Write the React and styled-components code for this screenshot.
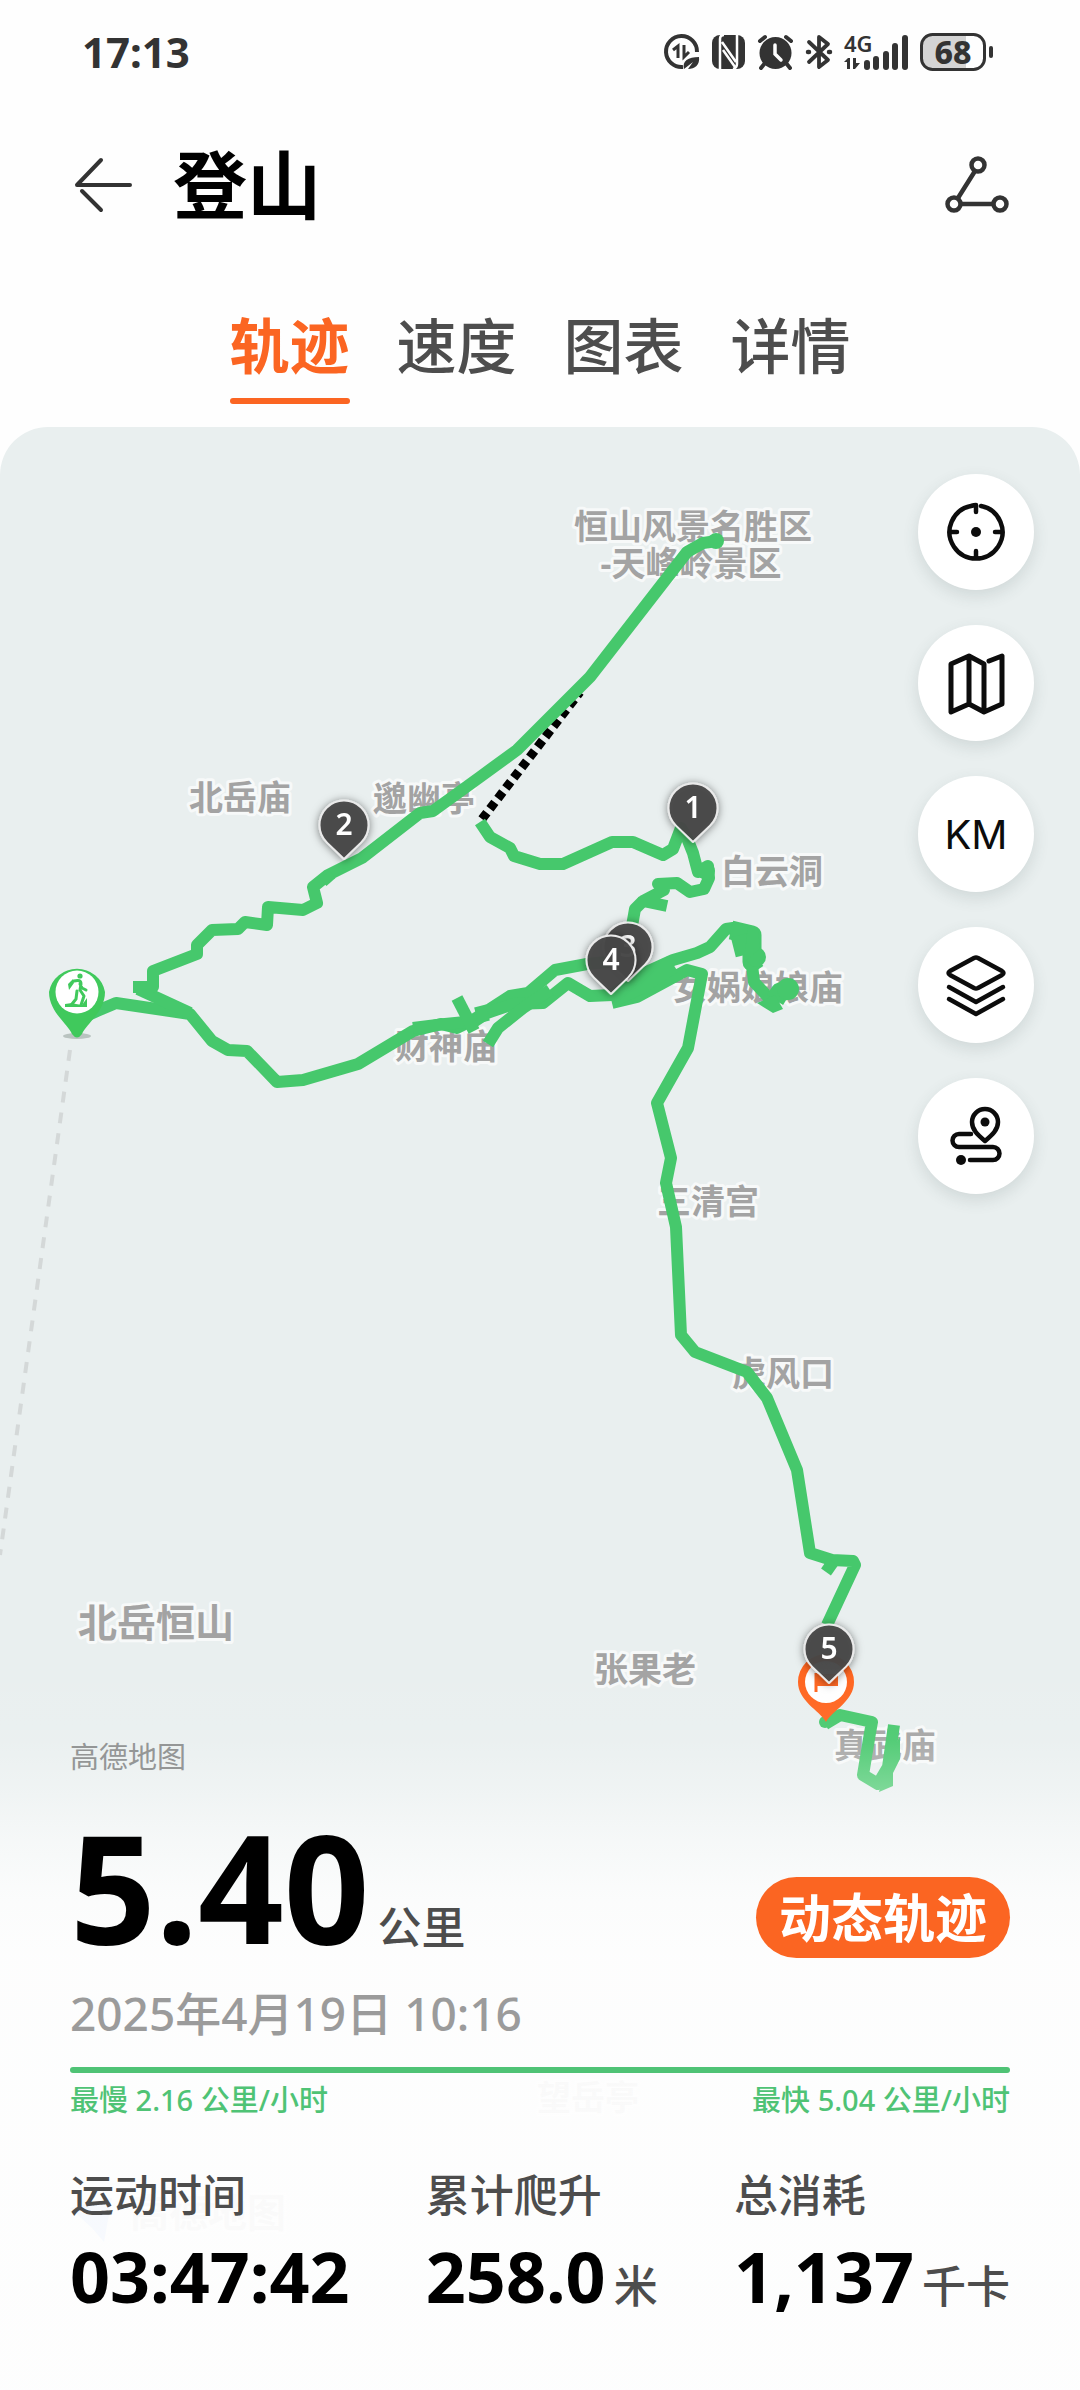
import styled, { createGlobalStyle } from "styled-components";

const TRACK_GREEN = "#46c86c";
const ORANGE = "#fb6522";
const INK = "#333333";

const GlobalStyle = createGlobalStyle`
  * {
    box-sizing: border-box;
  }
  body {
    margin: 0;
    background: #fefefe;
    color: #4d4d4d;
    font-family: "Noto Sans", "Noto Sans CJK SC", sans-serif;
  }
  button {
    border: 0;
    padding: 0;
    background: none;
    color: inherit;
    font: inherit;
    cursor: pointer;
  }
  svg {
    display: block;
    overflow: visible;
  }
`;

const Page = styled.div`
  display: flex;
  flex-direction: column;
  min-height: 100vh;
`;

const StatusBar = styled.div`
  display: flex;
  align-items: center;
  justify-content: space-between;
  height: 104px;
  padding: 0 86px 0 82px;
  color: ${INK};
`;

const Clock = styled.time`
  font-size: 42px;
  font-weight: 700;
  line-height: 60px;
`;

const StatusIcons = styled.div`
  display: flex;
  align-items: center;
  gap: 12px;
`;

const Header = styled.header`
  display: flex;
  align-items: center;
  height: 162px;
  padding: 0 70px;
`;

const IconButton = styled.button`
  flex: none;
`;

const Title = styled.h1`
  flex: 1;
  margin: 0 0 0 35px;
  color: #000;
  font-size: 74px;
  font-weight: 700;
  line-height: 90px;
`;

const Tabs = styled.nav`
  display: flex;
  justify-content: center;
  gap: 47px;
  padding: 40px 24px 23px;
`;

const Tab = styled.button`
  padding-bottom: 12px;
  color: ${(props) => (props.$active ? ORANGE : "#4d4d4d")};
  font-size: 60px;
  font-weight: ${(props) => (props.$active ? 700 : 500)};
  line-height: 80px;

  &::after {
    content: "";
    display: block;
    height: 6px;
    margin-top: 12px;
    margin-bottom: -12px;
    border-radius: 3px;
    background: ${(props) => (props.$active ? ORANGE : "transparent")};
  }
`;

const MapSection = styled.main`
  position: relative;
  display: flex;
  flex: 1;
  flex-direction: column;
  justify-content: space-between;
  overflow: hidden;
  border-radius: 48px 48px 0 0;
  background: #e9efef;
`;

const MapCanvas = styled.svg`
  position: absolute;
  top: 0;
  left: 0;
  width: 100%;
  height: auto;
`;

const PlaceLabel = styled.text`
  fill: #a3a3a3;
  stroke: #f7f9f9;
  stroke-width: 6px;
  stroke-linejoin: round;
  paint-order: stroke;
  font-size: ${(props) => (props.$large ? 39 : 34)}px;
  font-weight: 700;
  text-anchor: middle;
`;

const PinNumber = styled.text`
  fill: #fff;
  font-size: 30px;
  font-weight: 600;
  text-anchor: middle;
`;

const Tools = styled.div`
  position: relative;
  display: flex;
  flex-direction: column;
  align-self: flex-end;
  gap: 35px;
  padding: 47px 46px 0 0;
`;

const ToolButton = styled.button`
  display: flex;
  align-items: center;
  justify-content: center;
  width: 116px;
  height: 116px;
  border-radius: 50%;
  background: #fff;
  box-shadow: 0 6px 16px rgba(60, 80, 80, 0.14);
  color: #0c0c0c;
  font-family: Inter, "Noto Sans", sans-serif;
  font-size: 40px;
  font-weight: 400;
`;

const Summary = styled.section`
  position: relative;
  padding: 77px 70px 74px;
  background: linear-gradient(
    to bottom,
    rgba(254, 254, 254, 0) 0,
    rgba(254, 254, 254, 0.08) 80px,
    rgba(254, 254, 254, 0.3) 130px,
    rgba(254, 254, 254, 0.6) 180px,
    rgba(254, 254, 254, 0.86) 240px,
    rgba(254, 254, 254, 0.95) 300px,
    rgba(254, 254, 254, 0.96) 100%
  );
`;

const Attribution = styled.p`
  margin: 0;
  color: #949696;
  font-size: 29px;
  line-height: 40px;
`;

const DistanceRow = styled.div`
  display: flex;
  align-items: flex-end;
  justify-content: space-between;
  margin-top: 37px;
`;

const Distance = styled.p`
  margin: 0;
  color: #000;
  font-size: 150px;
  font-weight: 700;
  line-height: 144px;
`;

const Unit = styled.span`
  margin-left: 8px;
  color: #4d4d4d;
  font-size: 44px;
  font-weight: 500;
  line-height: 44px;
`;

const ReplayButton = styled.button`
  height: 81px;
  padding: 0 23px;
  border-radius: 41px;
  background: ${ORANGE};
  color: #fff;
  font-size: 52px;
  font-weight: 700;
  line-height: 80px;
`;

const StartTime = styled.p`
  margin: 25px 0 24px;
  color: #9b9b9b;
  font-size: 46px;
  font-weight: 500;
  line-height: 60px;
`;

const SpeedBar = styled.div`
  height: 6px;
  border-radius: 3px;
  background: #4fc375;
`;

const SpeedRange = styled.div`
  display: flex;
  justify-content: space-between;
  margin-top: 7px;
  color: #4fc375;
  font-size: 29px;
  font-weight: 500;
  line-height: 40px;
`;

const Stats = styled.dl`
  display: flex;
  justify-content: space-between;
  margin: 45px 0 0;
`;

const StatLabel = styled.dt`
  font-size: 44px;
  font-weight: 500;
  line-height: 60px;
`;

const StatValue = styled.dd`
  margin: 11px 0 0;
  color: #000;
  font-size: 70px;
  font-weight: 700;
  line-height: 80px;
  white-space: nowrap;
`;

const tabs = ["轨迹", "速度", "图表", "详情"];

const places = [
  { name: "恒山风景名胜区", x: 693, y: 539 },
  { name: "-天峰岭景区", x: 691, y: 576 },
  { name: "北岳庙", x: 240, y: 810 },
  { name: "邈幽亭", x: 424, y: 811 },
  { name: "白云洞", x: 772, y: 884 },
  { name: "财神庙", x: 446, y: 1059 },
  { name: "女娲娘娘庙", x: 758, y: 1000 },
  { name: "三清宫", x: 708, y: 1214 },
  { name: "虎风口", x: 783, y: 1386 },
  { name: "张果老", x: 645, y: 1682 },
  { name: "真武庙", x: 885, y: 1758 },
  { name: "望岳亭", x: 588, y: 2110 },
  { name: "北岳恒山", x: 156, y: 1637, large: true },
];

const trackLines = [
  // start, western loop and the way up to the peak
  "77,1020 97,1011 116,1003 190,1014 212,1041 228,1050 247,1051 277,1082 303,1080 358,1064 413,1031 441,1024 457,1028 473,1020 510,996 528,993 555,970 587,964 628,960",
  "190,1013 138,989",
  "133,987 153,987 153,971 197,954 197,945 212,930 238,929 245,922 267,925 268,907 303,910 317,903 313,887 328,875 362,858 420,813 433,811 480,777 517,750 590,677 687,552 703,543 717,541",
  "325,875 331,882",
  // gully between the two markers
  "480,822 490,837 510,848 514,856 540,864 563,864 612,842 633,842 663,855 673,849 681,828 687,838 693,853 698,872 708,866 709,878 704,889 690,892 677,883 658,884 664,890 643,901 667,906",
  "643,901 635,909 632,926",
  // temple branch
  "413,1028 445,1024 475,1021 487,1013 513,1004 543,1003 568,983 590,996 612,995 640,975 673,960 697,953 710,947 726,929 733,928 750,939 752,965 754,982 768,997 774,1005",
  "612,1003 637,997 687,970 702,974 688,1048 657,1103 671,1158 666,1183 676,1227 681,1335 695,1352 747,1372 767,1398 797,1470 810,1553 832,1560 853,1561 855,1565 827,1625",
  "488,1044 498,1028 523,1008 550,990",
  "457,998 474,1031",
  "480,1006 484,1022",
  "833,1562 826,1572",
  // tail behind the finish flag
  "825,1724 840,1715 872,1722 870,1733 863,1775 878,1784 888,1767 894,1725",
];

const thickLines = [
  "612,998 640,985 673,964",
  "731,930 752,935 752,962 758,958",
  "740,935 745,955",
  "775,1000 780,992 788,990",
];

const pins = [
  { label: "1", x: 693, y: 808 },
  { label: "2", x: 344, y: 825 },
  { label: "3", x: 628, y: 947 },
  { label: "4", x: 611, y: 960 },
];

const stats = [
  { label: "运动时间", value: "03:47:42" },
  { label: "累计爬升", value: "258.0", unit: "米" },
  { label: "总消耗", value: "1,137", unit: "千卡" },
];

const DataSaverIcon = () => (
  <svg width="36" height="36" viewBox="0 0 36 36" fill="none" stroke={INK}>
    <path d="M33 18A15.500 15.500 0 1 0 19 33" strokeWidth="4" />
    <path d="M9 16l5-4v12M20 11v12l5-5" strokeWidth="3" />
    <path d="M20 35c-2-8 4-12 15-12 1 8-4 12-11 12l5-7z" fill={INK} stroke="none" />
  </svg>
);

const NfcIcon = () => (
  <svg width="33" height="36" viewBox="0 0 33 36">
    <rect y="1" width="33" height="34" rx="8" fill={INK} />
    <path
      d="M8 35V5q0-4 4-4M10 8l14 20M11 16l12 17M25 0v30q0 4-4 5"
      fill="none"
      stroke="#fefefe"
      strokeWidth="2.500"
    />
  </svg>
);

const AlarmIcon = () => (
  <svg
    width="37"
    height="36"
    viewBox="0 0 37 36"
    fill="none"
    stroke={INK}
    strokeWidth="4"
    strokeLinecap="round"
  >
    <circle cx="18.500" cy="19" r="16" fill={INK} stroke="none" />
    <path d="M3 7l5-4M34 7l-5-4M8 29l-4 5M29 29l4 5" />
    <path d="M18 11v9l6 6" stroke="#fefefe" strokeWidth="3.500" />
  </svg>
);

const BluetoothIcon = () => (
  <svg
    width="26"
    height="36"
    viewBox="0 0 26 36"
    fill="none"
    stroke={INK}
    strokeWidth="3.800"
    strokeLinejoin="round"
    strokeLinecap="round"
  >
    <path d="M3 8l19 18-9 7V3l9 7L3 28" />
    <path d="M2 18h1M23 18h1" strokeWidth="4.500" />
  </svg>
);

const SignalIcon = () => (
  <svg width="64" height="36" viewBox="0 0 64 36" fill={INK}>
    <text x="0" y="18" fontSize="22" fontWeight="600">
      4G
    </text>
    <path d="M0 28l4-4h2v11H3v-7zM9 24h3v5h4l-5 6H9z" />
    <rect x="20" y="26" width="6" height="10" rx="3" />
    <rect x="29" y="22" width="6" height="14" rx="3" />
    <rect x="39" y="17" width="6" height="19" rx="3" />
    <rect x="48" y="9" width="6" height="27" rx="3" />
    <rect x="58" y="1" width="6" height="35" rx="3" />
  </svg>
);

const BatteryIcon = () => (
  <svg width="74" height="38" viewBox="0 0 74 38">
    <path d="M12 2h34v34H12A10 10 0 0 1 2 26V12A10 10 0 0 1 12 2z" fill="#d4d4d4" />
    <rect
      x="1.500"
      y="1.500"
      width="63"
      height="35"
      rx="11"
      fill="none"
      stroke={INK}
      strokeWidth="3"
    />
    <rect x="69" y="13" width="4" height="12" rx="2" fill={INK} />
    <text x="33" y="31" fontSize="32" fontWeight="800" textAnchor="middle" fill={INK}>
      68
    </text>
  </svg>
);

const BackIcon = () => (
  <svg
    width="68"
    height="60"
    viewBox="0 0 68 60"
    fill="none"
    stroke={INK}
    strokeWidth="4"
    strokeLinecap="round"
    strokeLinejoin="round"
  >
    <path d="M60 30H7L31 5M12 36l19 19" />
  </svg>
);

const ShareIcon = () => (
  <svg
    width="66"
    height="60"
    viewBox="0 0 66 60"
    fill="none"
    stroke={INK}
    strokeWidth="4.500"
  >
    <circle cx="34" cy="10" r="6.500" />
    <circle cx="10" cy="49" r="6.500" />
    <circle cx="56" cy="49" r="6.500" />
    <path d="M31 16L14 43M17 49h32" />
  </svg>
);

const ToolSvg = ({ children, strokeWidth = 4.5 }) => (
  <svg
    width="64"
    height="64"
    viewBox="0 0 64 64"
    fill="none"
    stroke="currentColor"
    strokeWidth={strokeWidth}
    strokeLinecap="round"
    strokeLinejoin="round"
  >
    {children}
  </svg>
);

const LocateIcon = () => (
  <ToolSvg>
    <path d="M37 6A26.500 26.500 0 1 1 27 6q3-1 5-1v7M6 32h7M51 32h7M32 58v-7" />
    <circle cx="32" cy="32" r="5" fill="currentColor" stroke="none" />
  </ToolSvg>
);

const MapIcon = () => (
  <ToolSvg strokeWidth={5}>
    <path d="M45 10l13-5v48l-18 8-15-8-18 8V13l18-8 15 8v47M25 6v47" />
  </ToolSvg>
);

const LayersIcon = () => (
  <ToolSvg>
    <path d="M30 5q2-1 4 0l24 13q3 2 0 4L34 35q-2 1-4 0L6 22q-3-2 0-4z" />
    <path d="M5 34l27 15 27-15M5 46l27 15 27-15" />
  </ToolSvg>
);

const RouteIcon = () => (
  <ToolSvg>
    <path d="M41 37c-7-6-13-11-13-19a13 13 0 0 1 26 0c0 8-6 13-13 19z" />
    <circle cx="41" cy="18" r="4.500" fill="currentColor" stroke="none" />
    <path d="M27 30H15a6.500 6.500 0 0 0 0 13h34a6.500 6.500 0 0 1 0 13H26" />
    <circle cx="17" cy="56" r="5" fill="currentColor" stroke="none" />
  </ToolSvg>
);

const tools = [
  { label: "定位", content: <LocateIcon /> },
  { label: "地图", content: <MapIcon /> },
  { label: "公里标记", content: "KM" },
  { label: "图层", content: <LayersIcon /> },
  { label: "路线", content: <RouteIcon /> },
];

const KilometrePin = ({ x, y, label }) => (
  <g transform={`translate(${x} ${y})`} filter="url(#pin-shadow)">
    <path
      d="M0 34L-17 17.600A24.500 24.500 0 1 1 17 17.600Z"
      fill="#474747"
      fillOpacity="0.95"
      stroke="#eaeaea"
      strokeWidth="2"
      strokeLinejoin="round"
    />
    <PinNumber x="0" y="10">
      {label}
    </PinNumber>
  </g>
);

const StartPin = () => (
  <g transform="translate(77 992)">
    <ellipse cx="0" cy="44" rx="14" ry="3" fill="#9aa5a0" opacity="0.6" />
    <path
      d="M-5 42C-9 32-28 20-28 0A28.500 28.500 0 0 1 28 0C28 20 9 32 5 42Q0 49-5 42z"
      fill="#40c95c"
    />
    <circle r="21.500" fill="#fff" />
    <circle cx="3" cy="-16" r="2.600" fill="#40c95c" />
    <path
      d="M-3-11Q4-13 4-8L3-2 7 4 4 13M0-1L-1 7-5 12M3-8L5-4 9-2"
      fill="none"
      stroke="#40c95c"
      strokeWidth="3"
      strokeLinecap="round"
      strokeLinejoin="round"
    />
    <path d="M-4-13L-9-8-8-2-3-9zM-12 15v-3l7-1 4 1 6 1 5-7v9z" fill="#40c95c" />
  </g>
);

const FinishPin = () => (
  <g transform="translate(826 1682)">
    <path d="M0 40C-7 28-28 19-28 0A28 28 0 0 1 28 0C28 19 7 28 0 40z" fill="#ff641e" />
    <circle r="21" fill="#fff" />
    <path d="M-10-9v19" stroke="#ff641e" strokeWidth="3" />
    <path d="M-10-8H12V4H-10z" fill="#ff641e" />
  </g>
);

const TrackMap = () => (
  <MapCanvas viewBox="0 427 1080 1963" role="img" aria-label="登山轨迹地图">
    <defs>
      <filter id="pin-shadow" x="-40%" y="-40%" width="180%" height="180%">
        <feDropShadow dx="0" dy="1" stdDeviation="4" floodColor="#000" floodOpacity="0.5" />
      </filter>
    </defs>

    <path
      d="M70 1050L0 1555"
      stroke="#d4d8d8"
      strokeWidth="4"
      strokeDasharray="11 10"
    />

    {places.map((place) => (
      <PlaceLabel key={place.name} x={place.x} y={place.y} $large={place.large}>
        {place.name}
      </PlaceLabel>
    ))}
    <path d="M70 2208l42-10-8 44-12-14z" fill="#5b93f5" />
    <PlaceLabel x="208" y="2227" $large>
      高德地图
    </PlaceLabel>

    <path d="M482 819L580 692" stroke="#000" strokeWidth="9" strokeDasharray="8 5" />

    <g fill="none" stroke={TRACK_GREEN} strokeLinejoin="round">
      {trackLines.map((points) => (
        <polyline key={points} points={points} strokeWidth="12" />
      ))}
      {thickLines.map((points) => (
        <polyline key={points} points={points} strokeWidth="19" />
      ))}
    </g>
    <g fill={TRACK_GREEN}>
      <circle cx="716" cy="541" r="8" />
      <circle cx="788" cy="989" r="11" />
      <circle cx="706" cy="871" r="9" />
      <circle cx="756" cy="957" r="10" />
      <circle cx="825" cy="1722" r="6" />
      <path d="M757 1003l18-8 8 14-10 4z" />
      <path d="M748 925l10 4 2 20-16 13z" />
      <path d="M888 1755l12-18v22l-7 14v13l-14 6z" />
    </g>

    {pins.map((pin) => (
      <KilometrePin key={pin.label} {...pin} />
    ))}
    <StartPin />
    <FinishPin />
    <KilometrePin label="5" x={829} y={1649} />
  </MapCanvas>
);

const App = () => {
  return (
    <>
      <GlobalStyle />
      <Page>
        <StatusBar>
          <Clock>17:13</Clock>
          <StatusIcons>
            <DataSaverIcon />
            <NfcIcon />
            <AlarmIcon />
            <BluetoothIcon />
            <SignalIcon />
            <BatteryIcon />
          </StatusIcons>
        </StatusBar>

        <Header>
          <IconButton aria-label="返回">
            <BackIcon />
          </IconButton>
          <Title>登山</Title>
          <IconButton aria-label="分享">
            <ShareIcon />
          </IconButton>
        </Header>

        <Tabs>
          {tabs.map((tab, i) => (
            <Tab key={tab} $active={i === 0} aria-current={i === 0 ? "page" : undefined}>
              {tab}
            </Tab>
          ))}
        </Tabs>

        <MapSection>
          <TrackMap />
          <Tools>
            {tools.map((tool) => (
              <ToolButton key={tool.label} aria-label={tool.label}>
                {tool.content}
              </ToolButton>
            ))}
          </Tools>

          <Summary>
            <Attribution>高德地图</Attribution>
            <DistanceRow>
              <Distance>
                5.40
                <Unit>公里</Unit>
              </Distance>
              <ReplayButton>动态轨迹</ReplayButton>
            </DistanceRow>
            <StartTime>2025年4月19日 10:16</StartTime>
            <SpeedBar />
            <SpeedRange>
              <span>最慢 2.16 公里/小时</span>
              <span>最快 5.04 公里/小时</span>
            </SpeedRange>
            <Stats>
              {stats.map((stat) => (
                <div key={stat.label}>
                  <StatLabel>{stat.label}</StatLabel>
                  <StatValue>
                    {stat.value}
                    {stat.unit && <Unit>{stat.unit}</Unit>}
                  </StatValue>
                </div>
              ))}
            </Stats>
          </Summary>
        </MapSection>
      </Page>
    </>
  );
};

export default App;
